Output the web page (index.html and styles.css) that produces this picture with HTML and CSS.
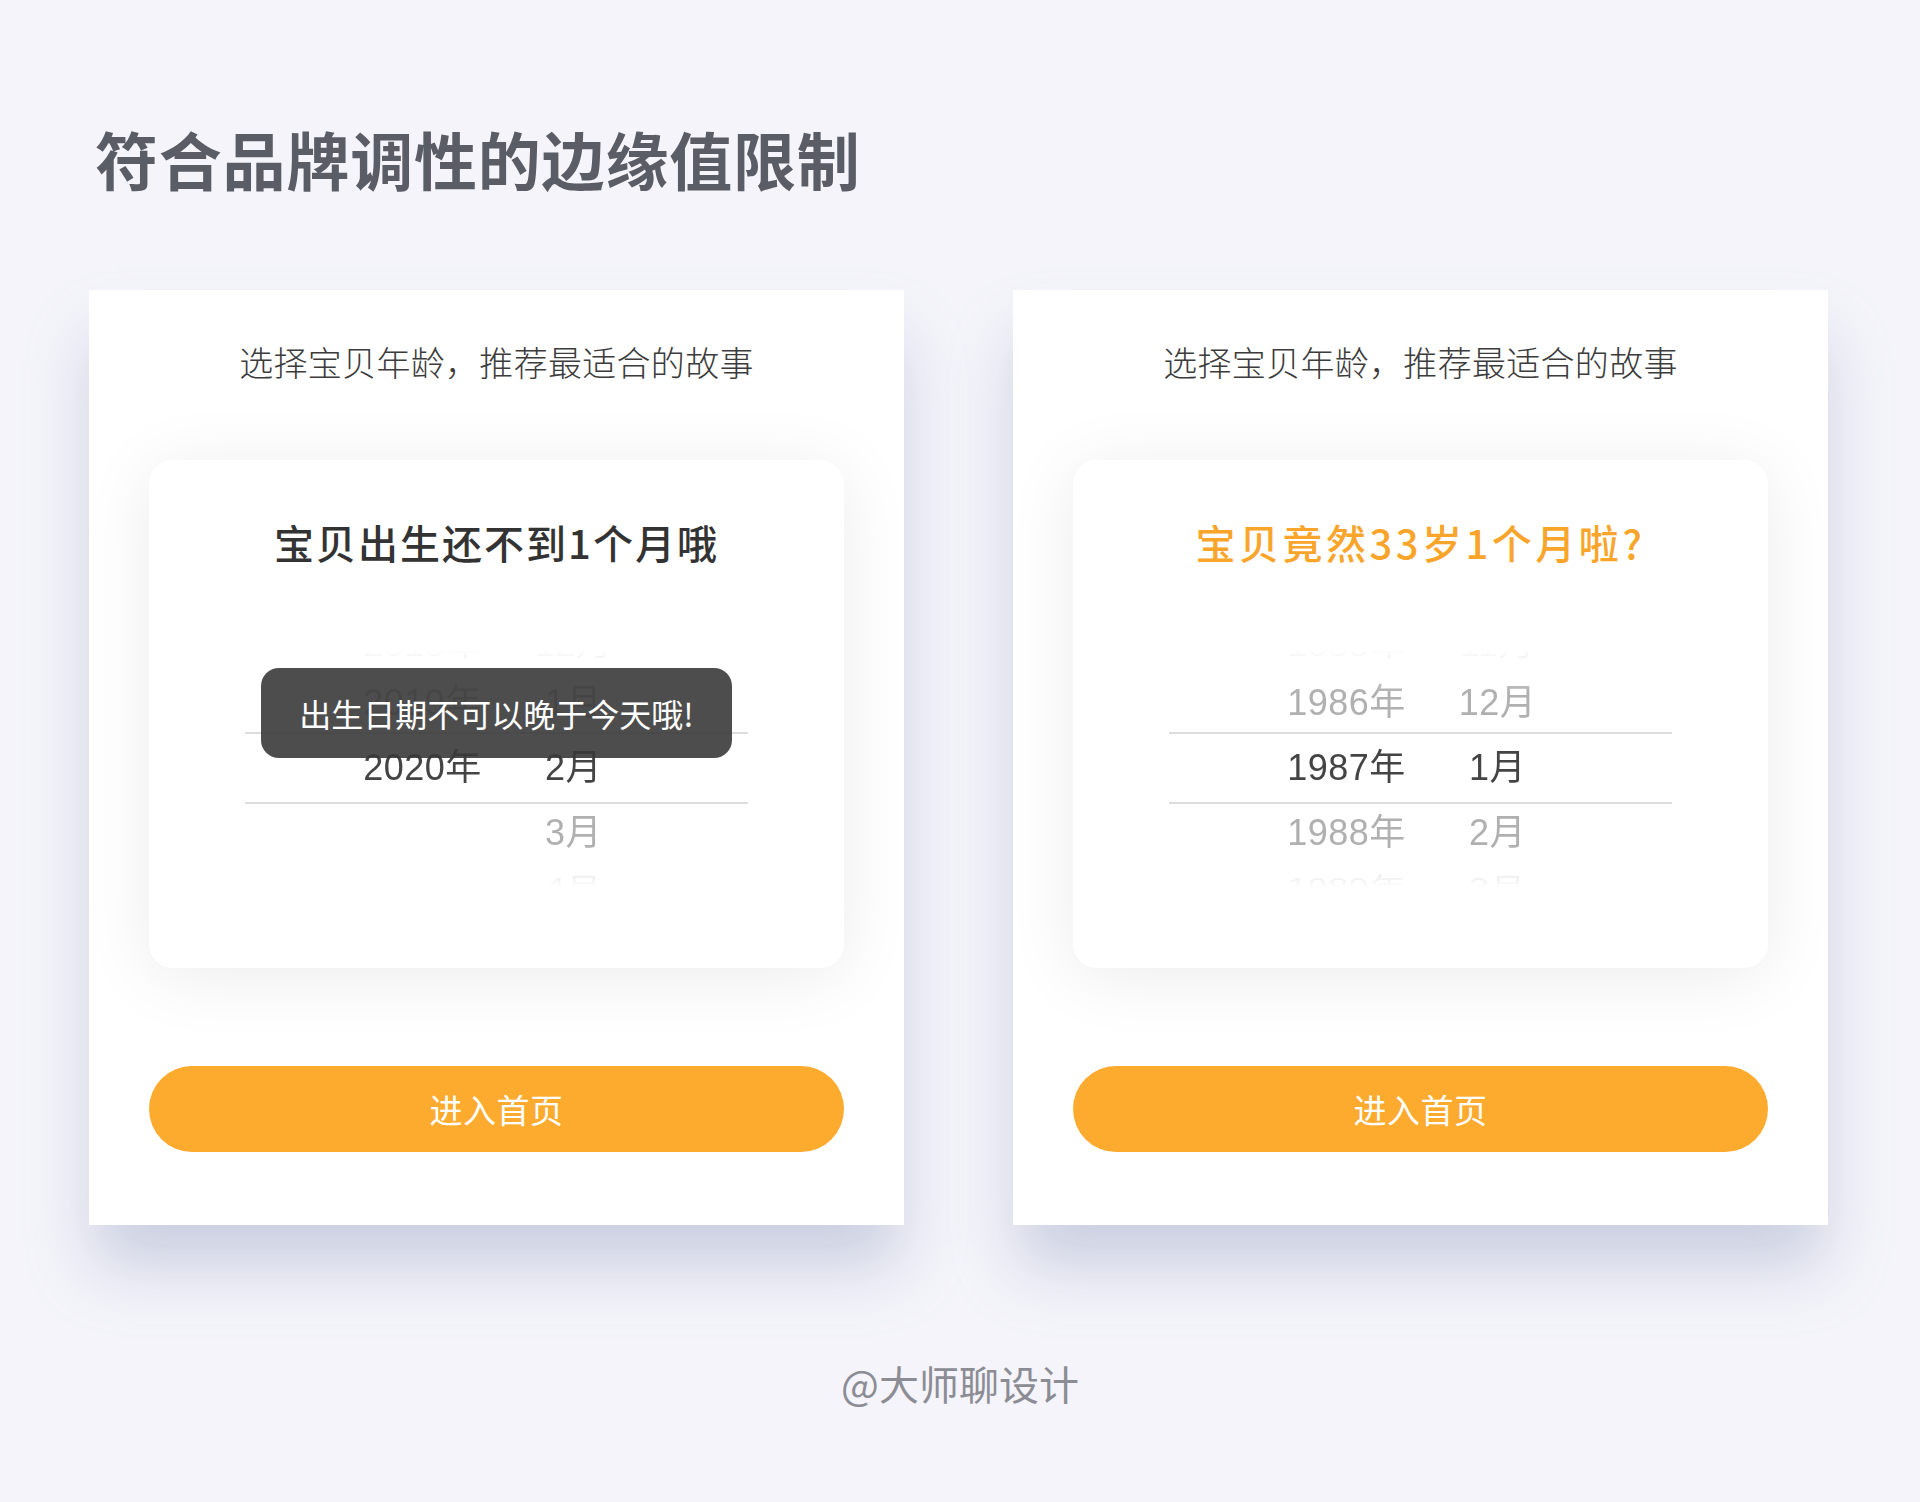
FILE: index.html
```html
<!DOCTYPE html>
<html lang="zh-CN">
<head>
    <meta charset="UTF-8">
    <meta name="viewport" content="width=device-width, initial-scale=1.0">
    <title>符合品牌调性的边缘值限制</title>
    <link rel="stylesheet" href="styles.css">
</head>
<body>
    <div class="page">
        <h1 class="title">符合品牌调性的边缘值限制</h1>

        <div class="cards">
            <div class="phone">
                <p class="prompt">选择宝贝年龄，推荐最适合的故事</p>
                <div class="panel">
                    <h2 class="panel-title">宝贝出生还不到1个月哦</h2>
                    <div class="picker">
                        <div class="picker-list">
                            <div class="row far"><span class="year">2018年</span><span class="month">12月</span></div>
                            <div class="row near"><span class="year">2019年</span><span class="month">1月</span></div>
                            <div class="row sel"><span class="year">2020年</span><span class="month">2月</span></div>
                            <div class="row near"><span class="year"></span><span class="month">3月</span></div>
                            <div class="row far"><span class="year"></span><span class="month">4月</span></div>
                        </div>
                    </div>
                    <div class="toast">出生日期不可以晚于今天哦!</div>
                </div>
                <button class="cta">进入首页</button>
            </div>

            <div class="phone">
                <p class="prompt">选择宝贝年龄，推荐最适合的故事</p>
                <div class="panel">
                    <h2 class="panel-title warn">宝贝竟然33岁1个月啦?</h2>
                    <div class="picker">
                        <div class="picker-list">
                            <div class="row far"><span class="year">1985年</span><span class="month">11月</span></div>
                            <div class="row near"><span class="year">1986年</span><span class="month">12月</span></div>
                            <div class="row sel"><span class="year">1987年</span><span class="month">1月</span></div>
                            <div class="row near"><span class="year">1988年</span><span class="month">2月</span></div>
                            <div class="row far"><span class="year">1989年</span><span class="month">3月</span></div>
                        </div>
                    </div>
                </div>
                <button class="cta">进入首页</button>
            </div>
        </div>

        <p class="credit">@大师聊设计</p>
    </div>
</body>
</html>
```

FILE: styles.css
```css
body {
    margin: 0;
    padding: 0;
    background-color: #f4f4fa;
    font-family: "Noto Sans CJK SC", "Noto Sans", sans-serif;
}

.page {
    padding: 126px 0 0 89px;
}

.title {
    margin: 0;
    padding-left: 6px;
    font-size: 63px;
    line-height: 63px;
    letter-spacing: 0.8px;
    font-weight: 700;
    color: #5b5d66;
}

.cards {
    display: flex;
    gap: 109px;
    margin-top: 101px;
}

.phone {
    width: 815px;
    box-sizing: border-box;
    padding: 52px 60px 73px;
    background: #fff;
    box-shadow: 0 45px 60px -5px rgba(150, 162, 192, 0.45);
}

.prompt {
    margin: 0;
    text-align: center;
    font-size: 34px;
    line-height: 40px;
    letter-spacing: 0.3px;
    font-weight: 300;
    color: #3c3c3c;
}

.panel {
    position: relative;
    margin-top: 78px;
    padding: 57.5px 0 80px;
    background: #fff;
    border-radius: 24px;
    box-shadow: 0 8px 70px rgba(0, 0, 0, 0.08);
}

.panel-title {
    margin: 0;
    text-align: center;
    font-size: 40px;
    line-height: 48px;
    letter-spacing: 2px;
    font-weight: 500;
    color: #333;
}

.panel-title.warn {
    color: #f9a52b;
    letter-spacing: 3.5px;
}

.picker {
    width: 503px;
    height: 238px;
    margin: 84.5px auto 0;
    overflow: hidden;
    -webkit-mask-image: linear-gradient(to bottom, transparent 0, #000 42px, #000 196px, transparent 238px);
    mask-image: linear-gradient(to bottom, transparent 0, #000 42px, #000 196px, transparent 238px);
}

.picker-list {
    margin-top: -28px;
}

.row {
    display: flex;
    justify-content: center;
    align-items: center;
    gap: 36px;
    padding-right: 12px;
    font-family: "Liberation Sans", "Noto Sans CJK SC", sans-serif;
    font-size: 36px;
    letter-spacing: 0.5px;
}

.row span {
    padding-bottom: 8px;
}

.row .year {
    width: 130px;
    text-align: center;
}

.row .month {
    width: 100px;
    text-align: center;
}

.row.far {
    height: 52px;
    color: #c4c4c4;
    transform: scaleY(0.7);
}

.row.near {
    height: 58px;
    color: #b0b0b0;
}

.row.sel {
    height: 68px;
    border-top: 2px solid #dcdcdc;
    border-bottom: 2px solid #dcdcdc;
    color: #444;
}

.toast {
    position: absolute;
    left: 112px;
    top: 208px;
    width: 471px;
    height: 90px;
    border-radius: 18px;
    background: rgba(58, 58, 58, 0.9);
    color: #fff;
    text-align: center;
    font-size: 32px;
    line-height: 90px;
}

.cta {
    display: block;
    width: 100%;
    height: 86px;
    margin-top: 98px;
    border: none;
    border-radius: 43px;
    background: #fdab2f;
    color: #fff;
    font-family: inherit;
    font-size: 33px;
    letter-spacing: 0.5px;
    cursor: pointer;
}

.credit {
    margin: 134px 0 0 -89px;
    text-align: center;
    font-size: 40px;
    line-height: 48px;
    color: #8c8c94;
}
```
